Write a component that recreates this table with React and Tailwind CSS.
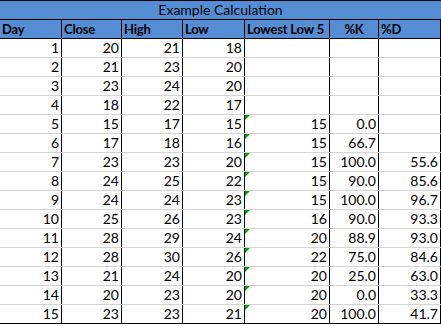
import React from 'react';

const cols = [
  { w: 'w-[62px]' },
  { w: 'w-[60px]' },
  { w: 'w-[61px]' },
  { w: 'w-[62px]' },
  { w: 'w-[85px]' },
  { w: 'w-[49px]' },
  { w: 'w-[62px]' },
];

const rows = [
  [1, 20, 21, 18, '', '', ''],
  [2, 21, 23, 20, '', '', ''],
  [3, 23, 24, 20, '', '', ''],
  [4, 18, 22, 17, '', '', ''],
  [5, 15, 17, 15, 15, '0.0', ''],
  [6, 17, 18, 16, 15, '66.7', ''],
  [7, 23, 23, 20, 15, '100.0', '55.6'],
  [8, 24, 25, 22, 15, '90.0', '85.6'],
  [9, 24, 24, 23, 15, '100.0', '96.7'],
  [10, 25, 26, 23, 16, '90.0', '93.3'],
  [11, 28, 29, 24, 20, '88.9', '93.0'],
  [12, 28, 30, 26, 22, '75.0', '84.6'],
  [13, 21, 24, 20, 20, '25.0', '63.0'],
  [14, 20, 23, 20, 20, '0.0', '33.3'],
  [15, 23, 23, 21, 20, '100.0', '41.7'],
];

const headers = ['Day', 'Close', 'High', 'Low', 'Lowest Low 5', '%K', '%D'];

export default function App() {
  return (
    <div
      className="w-[441px] h-[326px] bg-white text-black text-[14px] leading-none"
      style={{ fontFamily: 'Lato, "Liberation Sans", sans-serif' }}
    >
      {/* title */}
      <div className="h-[20px] border-t border-b border-black bg-[#558ed5] flex items-center justify-center">
        Example Calculation
      </div>

      {/* header row */}
      <div className="flex h-[19px] border-b border-black bg-[#558ed5] font-bold text-[13px] tracking-[-0.2px]">
        {headers.map((h, i) => (
          <div
            key={h}
            className={`${cols[i].w} h-full border-r border-black flex items-center whitespace-nowrap overflow-hidden ${
              i === 5 ? 'justify-center' : 'pl-[2px]'
            }`}
          >
            {h}
          </div>
        ))}
      </div>

      {/* data rows */}
      {rows.map((r, ri) => (
        <div
          key={ri}
          className={`flex h-[19px] border-b ${
            ri === rows.length - 1 ? 'border-black' : 'border-[#d4d4d4]'
          }`}
        >
          {r.map((v, ci) => (
            <div
              key={ci}
              className={`${cols[ci].w} relative h-full border-r border-black flex items-center justify-end pr-[2px]`}
            >
              {ci === 4 && v !== '' && (
                <span className="absolute left-0 top-0 w-0 h-0 border-t-[5px] border-t-[#00a000] border-r-[5px] border-r-transparent" />
              )}
              {v}
            </div>
          ))}
        </div>
      ))}
    </div>
  );
}
